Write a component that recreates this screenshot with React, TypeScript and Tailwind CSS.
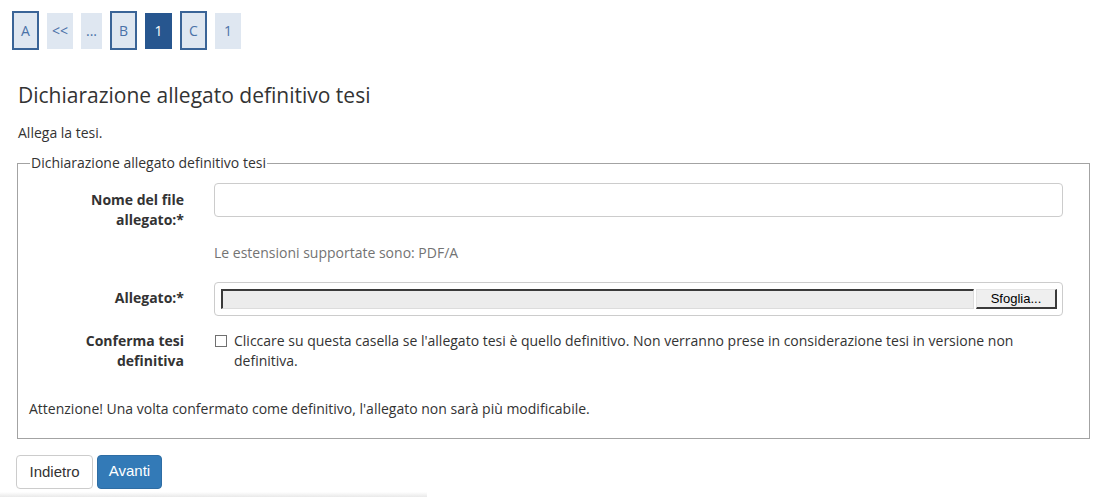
const crumbs = [
  { label: "A", kind: "outlined", w: "w-[27px]" },
  { label: "<<", kind: "plain", w: "w-[26px]" },
  { label: "...", kind: "plain", w: "w-[21px]" },
  { label: "B", kind: "outlined", w: "w-[27px]" },
  { label: "1", kind: "active", w: "w-[27px]" },
  { label: "C", kind: "outlined", w: "w-[27px]" },
  { label: "1", kind: "plain", w: "w-[26px]" },
];

export default function App() {
  return (
    <div className="flex h-[497px] w-[1108px] flex-col overflow-hidden bg-white font-['Open_Sans',sans-serif] text-[14px] leading-5 text-[#333]">
      <nav className="ml-3 mt-[11px] flex h-[39px] items-center gap-2">
        {crumbs.map((c, i) => (
          <span
            key={i}
            className={`flex items-center justify-center text-[14px] ${c.w} ${
              c.kind === "outlined"
                ? "h-[39px] border-2 border-[#3a6497] bg-[#dfe7f1] text-[#4a72a8]"
                : c.kind === "active"
                  ? "h-9 bg-[#27568f] text-white"
                  : "h-9 bg-[#dfe7f1] text-[#4a72a8]"
            }`}
          >
            {c.label}
          </span>
        ))}
      </nav>

      <h1 className="ml-[18px] mt-[33px] text-[21px] font-normal leading-6 text-[#333]">
        Dichiarazione allegato definitivo tesi
      </h1>

      <p className="ml-[18px] mt-4">Allega la tesi.</p>

      <fieldset className="ml-[17px] mt-[10px] w-[1073px] border border-[#a3a3a3] pb-[19px] pl-3">
        <legend className="px-px leading-5">
          Dichiarazione allegato definitivo tesi
        </legend>

        <div className="mt-[10px] flex gap-[30px]">
          <label className="w-[154px] pt-[7px] text-right font-bold">
            Nome del file allegato:*
          </label>
          <div className="w-[849px]">
            <div className="h-[34px] rounded-[4px] border border-[#ccc] bg-white" />
            <p className="mt-[26px] text-[#737373]">
              Le estensioni supportate sono: PDF/A
            </p>
          </div>
        </div>

        <div className="mt-[19px] flex gap-[30px]">
          <label className="w-[154px] pt-[6px] text-right font-bold">
            Allegato:*
          </label>
          <div className="flex h-[34px] w-[849px] items-center gap-[2px] rounded-[4px] border border-[#ccc] pl-[6px] pr-[5px]">
            <div className="h-5 flex-1 border-l-2 border-t-2 border-b border-r border-b-[#dcdcdc] border-l-[#3a3a3a] border-r-[#dcdcdc] border-t-[#3a3a3a] bg-[#ececec]" />
            <div className="flex h-5 w-[81px] items-center justify-center border-b-2 border-r-2 border-l border-t border-b-[#3a3a3a] border-l-[#e4e4e4] border-r-[#3a3a3a] border-t-[#e4e4e4] bg-[#efefef] font-['Liberation_Sans',Arial,sans-serif] text-[13px] text-black">
              Sfoglia...
            </div>
          </div>
        </div>

        <div className="mt-[15px] flex gap-[30px]">
          <label className="w-[154px] text-right font-bold">
            Conferma tesi definitiva
          </label>
          <div className="flex w-[849px] gap-[7px]">
            <span className="ml-px mt-1 h-3 w-3 shrink-0 border border-[#707070] bg-white" />
            <p>
              Cliccare su questa casella se l'allegato tesi è quello definitivo.
              Non verranno prese in considerazione tesi in versione non
              definitiva.
            </p>
          </div>
        </div>

        <p className="-ml-px mt-7">
          Attenzione! Una volta confermato come definitivo, l'allegato non sarà
          più modificabile.
        </p>
      </fieldset>

      <div className="ml-4 mt-4 flex gap-1 font-['Liberation_Sans',Arial,sans-serif] text-[15px]">
        <button className="h-[34px] w-[77px] rounded-[4px] border border-[#ccc] bg-white text-[#333]">
          Indietro
        </button>
        <button className="h-[34px] w-[65px] rounded-[4px] border border-[#2e6da4] bg-[#337ab7] pb-[2px] text-white">
          Avanti
        </button>
      </div>

      <div className="mt-[3px] h-[5px] w-[427px] bg-gradient-to-b from-white to-[#e9e9e9]" />
    </div>
  );
}
